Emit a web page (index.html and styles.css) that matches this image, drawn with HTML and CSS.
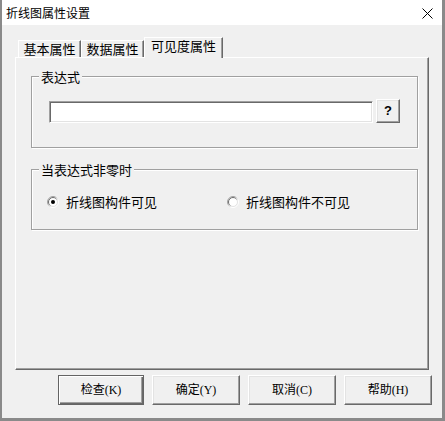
FILE: index.html
```html
<!DOCTYPE html>
<html lang="zh">
<head>
<meta charset="utf-8">
<title>折线图属性设置</title>
<link rel="stylesheet" href="styles.css">
</head>
<body>
<div class="window">
  <div class="titlebar">
    <span class="title">折线图属性设置</span>
    <svg class="close" width="11" height="11" viewBox="0 0 11 11"><path d="M0.5 0.5 L10.5 10.5 M10.5 0.5 L0.5 10.5" stroke="#000" stroke-width="1" fill="none"/></svg>
  </div>
  <div class="content">
    <div class="tabs">
      <div class="tab t1">基本属性</div>
      <div class="tab t2">数据属性</div>
      <div class="tab active">可见度属性</div>
    </div>
    <div class="panel">
      <fieldset class="group g1">
        <legend>表达式</legend>
        <div class="g-inner exprrow">
          <div class="textbox"></div>
          <div class="qbtn">?</div>
        </div>
      </fieldset>
      <fieldset class="group g2">
        <legend>当表达式非零时</legend>
        <div class="g-inner radios">
          <label class="radio">
            <svg width="12" height="12" viewBox="0 0 12 12">
              <defs>
                <linearGradient id="ro" x1="0" y1="0" x2="1" y2="1"><stop offset="0.35" stop-color="#a0a0a0"/><stop offset="0.65" stop-color="#ffffff"/></linearGradient>
                <linearGradient id="ri" x1="0" y1="0" x2="1" y2="1"><stop offset="0.35" stop-color="#696969"/><stop offset="0.65" stop-color="#e3e3e3"/></linearGradient>
              </defs>
              <circle cx="6" cy="6" r="5.5" fill="none" stroke="url(#ro)"/>
              <circle cx="6" cy="6" r="4.5" fill="#fff" stroke="url(#ri)"/>
              <circle cx="6" cy="6" r="2" fill="#000"/>
            </svg>
            <span>折线图构件可见</span>
          </label>
          <label class="radio">
            <svg width="12" height="12" viewBox="0 0 12 12">
              <circle cx="6" cy="6" r="5.5" fill="none" stroke="url(#ro)"/>
              <circle cx="6" cy="6" r="4.5" fill="#fff" stroke="url(#ri)"/>
            </svg>
            <span>折线图构件不可见</span>
          </label>
        </div>
      </fieldset>
    </div>
    <div class="buttons">
      <div class="btn default">检查(K)</div>
      <div class="btn">确定(Y)</div>
      <div class="btn">取消(C)</div>
      <div class="btn">帮助(H)</div>
    </div>
  </div>
</div>
</body>
</html>
```
FILE: styles.css
```css
* { box-sizing: border-box; }
html, body { margin: 0; padding: 0; }
body {
  width: 445px;
  height: 421px;
  overflow: hidden;
  font-family: "Noto Sans CJK SC", "Noto Sans", sans-serif;
  color: #000;
  background: #fff;
}
.window {
  width: 445px;
  height: 421px;
  border-left: 2px solid #8a8a8a;
  border-right: 3px solid #8a8a8a;
  border-bottom: 3px solid #8a8a8a;
  background: #f0f0f0;
  display: flex;
  flex-direction: column;
}
.titlebar {
  height: 25px;
  background: #fff;
  display: flex;
  align-items: center;
  justify-content: space-between;
  padding: 0 9px 0 4px;
}
.title {
  font-size: 12px;
  line-height: 14px;
}
.close { display: block; margin-top: 1px; }
.content {
  flex: 1;
  padding: 12px 13px 0 13px;
  display: flex;
  flex-direction: column;
}
.tabs {
  height: 20px;
  display: flex;
  align-items: flex-end;
  padding-left: 3px;
  position: relative;
  z-index: 2;
}
.tab {
  height: 17px;
  font-size: 13px;
  line-height: 15px;
  text-align: center;
  border-top: 1px solid #fff;
  border-left: 1px solid #fff;
  border-right: 1px solid #696969;
  box-shadow: inset -1px 0 0 #a0a0a0;
  background: #f0f0f0;
}
.t1 { width: 63px; }
.t2 { width: 63px; }
.tab.active {
  width: 79px;
  height: 21px;
  margin-bottom: -1px;
  line-height: 16px;
}
.panel {
  height: 313px;
  border-top: 1px solid #fff;
  border-left: 1px solid #fff;
  border-right: 1px solid #696969;
  border-bottom: 1px solid #696969;
  box-shadow: inset -1px -1px 0 #a0a0a0;
  padding: 11px 0 0 15px;
}
.group {
  width: 387px;
  margin: 0;
  padding: 0;
  border: 1px solid #a0a0a0;
  box-shadow: inset 1px 1px 0 #fff, 1px 1px 0 #fff;
  min-width: 0;
}
.group legend {
  font-size: 13px;
  line-height: 15px;
  padding: 0 2px;
  margin-left: 7px;
  background: #f0f0f0;
}
.g2 { margin-top: 14px; }
.exprrow {
  display: flex;
  align-items: flex-end;
  padding: 15px 0 24px 17px;
}
.textbox {
  width: 324px;
  height: 22px;
  background: #fff;
  border-top: 1px solid #a0a0a0;
  border-left: 1px solid #a0a0a0;
  border-right: 1px solid #fff;
  border-bottom: 1px solid #fff;
  box-shadow: inset 1px 1px 0 #696969, inset -1px -1px 0 #e3e3e3;
}
.qbtn {
  width: 24px;
  height: 24px;
  margin-left: 3px;
  font-family: "Liberation Sans", sans-serif;
  font-weight: bold;
  font-size: 13px;
  line-height: 21px;
  text-align: center;
  border-top: 1px solid #fff;
  border-left: 1px solid #fff;
  border-right: 1px solid #696969;
  border-bottom: 1px solid #696969;
  box-shadow: inset -1px -1px 0 #a0a0a0, inset 1px 1px 0 #e3e3e3;
}
.radios {
  display: grid;
  grid-template-columns: 180px 1fr;
  padding: 17px 0 19px 15px;
}
.radio {
  display: flex;
  align-items: center;
  height: 16px;
  font-size: 13px;
  line-height: 16px;
}
.radio svg { display: block; margin-right: 7px; flex: none; }
.buttons {
  margin-top: 5px;
  margin-right: -3px;
  height: 30px;
  display: flex;
  justify-content: flex-end;
  gap: 8px;
}
.btn {
  width: 88px;
  height: 30px;
  font-family: "Liberation Serif", "Noto Sans CJK SC", serif;
  font-size: 12px;
  line-height: 28px;
  text-align: center;
  border-top: 1px solid #fff;
  border-left: 1px solid #fff;
  border-right: 1px solid #696969;
  border-bottom: 1px solid #696969;
  box-shadow: inset -1px -1px 0 #a0a0a0, inset 1px 1px 0 #e3e3e3;
}
.btn.default {
  width: 86px;
  border: 1px solid #646464;
  box-shadow: inset 1px 1px 0 #fff, inset -1px -1px 0 #696969, inset -2px -2px 0 #a0a0a0;
}
```
